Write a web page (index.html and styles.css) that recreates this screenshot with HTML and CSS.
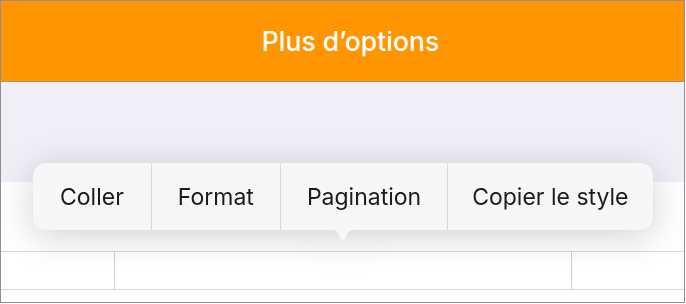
FILE: index.html
```html
<!DOCTYPE html>
<html lang="fr">
<head>
<meta charset="utf-8">
<title>Plus d’options</title>
<link rel="stylesheet" href="styles.css">
</head>
<body>
<div class="frame">
  <header class="navbar"><h1 class="title">Plus d’options</h1></header>
  <div class="toolbar"></div>
  <div class="sheet">
    <div class="blank"></div>
    <div class="row">
      <div class="cell c1"></div>
      <div class="cell c2"></div>
      <div class="cell c3"></div>
    </div>
  </div>
  <div class="menu">
    <div class="menu-bar">
      <span class="item">Coller</span>
      <span class="item">Format</span>
      <span class="item">Pagination</span>
      <span class="item">Copier le style</span>
    </div>
    <svg class="arrow" width="38" height="13" viewBox="0 0 38 13"><path d="M0 0 C9 0 12 1 15 5 L17.3 10.5 Q19 13 20.7 10.5 L23 5 C26 1 29 0 38 0 Z" fill="#f7f7f7"/></svg>
  </div>
</div>
</body>
</html>
```
FILE: styles.css
```css
html, body {
  margin: 0;
  padding: 0;
  background: #ffffff;
}
.frame {
  position: relative;
  width: 683px;
  height: 301px;
  border: 1px solid #8e8e93;
  background: #ffffff;
  overflow: hidden;
  font-family: Inter, "Noto Sans", sans-serif;
}
.navbar {
  height: 80px;
  background: #ff9500;
  border-bottom: 1px solid #b99468;
  display: flex;
  align-items: center;
  justify-content: center;
  padding-left: 16px;
}
.title {
  margin: 0;
  color: #ffffff;
  font-size: 26.5px;
  font-weight: 500;
  letter-spacing: 0;
}
.toolbar {
  height: 100px;
  background: #f0eff5;
}
.sheet {
  height: 120px;
  display: flex;
  flex-direction: column;
}
.blank {
  height: 69px;
  border-bottom: 1px solid #d6d6da;
}
.row {
  height: 37px;
  display: flex;
  border-bottom: 1px solid #d6d6da;
}
.cell { height: 100%; }
.c1 { width: 113px; border-right: 1px solid #cfcfd4; }
.c2 { width: 456px; border-right: 1px solid #cfcfd4; }
.c3 { flex: 1; }
.menu {
  position: absolute;
  left: 32px;
  top: 162px;
  display: flex;
  flex-direction: column;
  align-items: center;
  filter: drop-shadow(0 6px 18px rgba(0, 0, 0, 0.18));
}
.menu-bar {
  display: flex;
  height: 67px;
  background: #f7f7f7;
  border-radius: 13px;
  overflow: hidden;
}
.item {
  display: flex;
  align-items: center;
  padding: 0 26px;
  font-size: 23px;
  color: #1c1c1e;
  border-left: 1px solid #d9d9d9;
  white-space: nowrap;
}
.item:first-child { border-left: none; padding: 0 27px; }
.item:last-child { padding: 0 24px; }
.arrow {
  display: block;
  margin-top: -1px;
}
```
